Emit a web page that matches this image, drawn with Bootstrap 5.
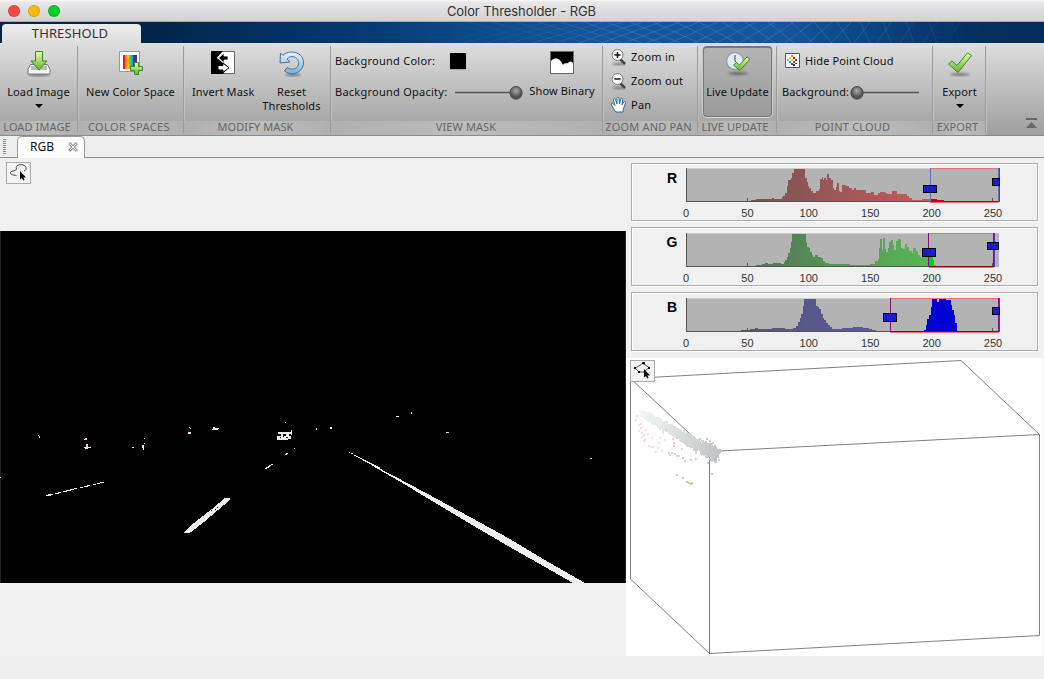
<!DOCTYPE html>
<html lang="en">
<head>
<meta charset="utf-8">
<title>Color Thresholder - RGB</title>
<link href="https://cdn.jsdelivr.net/npm/bootstrap@5.3.0/dist/css/bootstrap.min.css" rel="stylesheet">
<style>
html,body{height:679px;overflow:hidden}
body{font:11px/14px "Noto Sans","Open Sans",sans-serif;letter-spacing:.25px;color:#111;background:#f0f0f0}
svg{display:block;flex:none}
.titlebar{height:22px;background:linear-gradient(#f4f4f4 0 1px,#e8e8ea 2px,#d2d2d4 21px,#b0aca8 21px);border-radius:5px 5px 0 0;font:13px/22px Inter,sans-serif;letter-spacing:-.08px;color:#333}
.light{width:12px;height:12px;border-radius:50%;border:1px solid #0002}
.banner{height:21px;background:linear-gradient(90deg,#022549 0 150px,#03366c 330px,#0d4a8a 480px,#14559a 620px,#14559a 780px,#0b4482 870px,#04305f 970px,#032d59)}
.banner .mesh{margin-left:259px}
.tooltab{width:139px;height:19px;margin:2px 0 0 2px;padding-right:3px;border-radius:4px 4px 0 0;background:linear-gradient(#ececec,#dedede);font-size:13px;line-height:18px;color:#333;letter-spacing:.1px}
.ribbon{height:93px;background:linear-gradient(#dedede,#a8a8a8 84%,#a0a0a0);border-bottom:1px solid #8a8a8a}
.group{position:relative;flex:none}
.group::after{content:"";position:absolute;right:0;top:3px;height:87px;width:1px;background:#9c9c9c;box-shadow:1px 0 #cfcfcf80}
.gbody{height:78px}
.gfoot{height:14px;line-height:11px;background:linear-gradient(90deg,#b0b0b0,#bdbdbd 50%,#b0b0b0);color:#666;text-align:center;white-space:nowrap;letter-spacing:.1px;font-size:11px}
.tool{padding-top:8px;text-align:center;white-space:nowrap;letter-spacing:.13px}
.tool svg{margin:0 auto}
.tool .cap{margin-top:8px;line-height:14px}
.caret{width:0;height:0;border:4px solid transparent;border-top-color:#000;border-bottom:0;margin:5px auto 0}
.pressed{width:69px;height:71px;margin:3px 0 0 5px;border:1px solid #777;border-width:2px 1px 1px;border-radius:4px;background:linear-gradient(#b4b4b4,#9b9b9b);box-shadow:0 1px #ddd,1px 0 #ccc,-1px 0 #ccc}
.swatch{width:16px;height:16px;background:#000;box-shadow:0 1px 1px #8888}
.docs{height:22px;background:#ededed;border-bottom:1px solid #8f8f8f}
.grip{width:3px;height:15px;margin:3px 0 0 3px;background:repeating-linear-gradient(#888 0 1px,#ededed 1px 2px)}
.doctab{width:68px;height:22px;margin:0 0 0 11px;border:1px solid #999;border-bottom:0;border-radius:5px 5px 0 0;background:#fcfcfc;padding:0 6px 2px 12px;font-size:12px;line-height:20px;letter-spacing:0;position:relative}
.work{height:498px}
.left{width:626px}
.toolbtn{width:25px;height:22px;border:1px solid #aaa;background:#f3f3f3}
.frame{width:407px;height:59px;margin-left:5px;border:1px solid #acacac;box-shadow:1px 1px #fff,inset 1px 1px #fff}
.frame svg{margin:-1px;overflow:visible}
.hist text{font:11px "Liberation Sans",Arial,sans-serif;letter-spacing:0;fill:#333;text-anchor:middle}
.hist text.ch{font-weight:bold;font-size:14px;fill:#000}
.cloud{width:417px;height:298px;background:#fff;position:relative}
.cloud .toolbtn{position:absolute;left:4px;top:2px}
.status{height:23px;background:#ededed}
</style>
</head>
<body class="d-flex flex-column">
<svg width="0" height="0" class="position-absolute">
<defs>
<linearGradient id="grn" x2="0" y2="1"><stop stop-color="#e9fbb0"/><stop offset="1" stop-color="#62b531"/></linearGradient>
<linearGradient id="blu" x2="0" y2="1"><stop stop-color="#e6f4fc"/><stop offset="1" stop-color="#7fb0d8"/></linearGradient>
<radialGradient id="knob" cx=".5" cy=".35"><stop stop-color="#aaa"/><stop offset="1" stop-color="#555"/></radialGradient>
<linearGradient id="hr" gradientUnits="userSpaceOnUse" x1="183" x2="915"><stop stop-color="#585252"/><stop offset="1" stop-color="#c85a5a"/></linearGradient>
<linearGradient id="hg" gradientUnits="userSpaceOnUse" x1="183" x2="915"><stop stop-color="#555a55"/><stop offset=".45" stop-color="#568458"/><stop offset="1" stop-color="#57b857"/></linearGradient>
<linearGradient id="hb" gradientUnits="userSpaceOnUse" x1="183" x2="915"><stop stop-color="#55555a"/><stop offset="1" stop-color="#5a5ab8"/></linearGradient>
<filter id="soft" x="-.5" y="-2" width="2" height="5"><feGaussianBlur stdDeviation="1"/></filter>
</defs></svg>

<header class="titlebar d-flex align-items-center">
  <div class="d-flex gap-2" style="padding-left:8px"><span class="light" style="background:#fc4644"></span><span class="light" style="background:#fdb90b"></span><span class="light" style="background:#06d028"></span></div>
  <div class="flex-fill text-center" style="padding-right:61px">Color Thresholder - RGB</div>
</header>

<div class="banner d-flex">
  <div class="tooltab text-center">THRESHOLD</div>
  <svg class="mesh" width="590" height="21" fill="none" stroke="#5d9bd0" stroke-opacity=".32" id="mesh"></svg>
</div>

<nav class="ribbon d-flex">
  <section class="group" style="width:78px">
    <div class="gbody tool" style="padding-right:1px"><svg width="24" height="26"><ellipse cx="12" cy="24" rx="11" ry="1.5" fill="#777" filter="url(#soft)"/><path d="M3.5 13.5h17l2.5 5v4.500H1v-4.500z" fill="#f7f7f7" stroke="#777"/><path d="M4 15h16v4H4z" fill="#bbb"/><path d="M8.500.5h7V10H20l-8 9-8-9h4.500z" fill="url(#grn)" stroke="#3f8a1c"/></svg>
    <div class="cap">Load Image</div><div class="caret"></div></div>
    <div class="gfoot" style="padding-right:4px">LOAD IMAGE</div>
  </section>
  <section class="group" style="width:106px">
    <div class="gbody tool" style="padding-right:1px"><svg width="26" height="26"><path d="M1.500.5h20v20h-20z" fill="#fff" stroke="#999"/><path d="M5 4h2v14H5z" fill="#e51b24"/><path d="M7 4h2v14H7z" fill="#f6871f"/><path d="M9 4h2v14H9z" fill="#fbc815"/><path d="M11 4h2v14h-2z" fill="#76c043"/><path d="M13 4h2v14h-2z" fill="#1ba5de"/><path d="M15 4h2v14h-2z" fill="#2b3d96"/><path d="M17 4h2v14h-2z" fill="#5b2a88"/><path d="M16.500 11.500h4v4h4v4h-4v4h-4v-4h-4v-4h4z" fill="url(#grn)" stroke="#3f8a1c"/></svg>
    <div class="cap">New Color Space</div></div>
    <div class="gfoot" style="padding-right:4px;letter-spacing:.4px">COLOR SPACES</div>
  </section>
  <section class="group" style="width:147px">
    <div class="gbody d-flex" style="padding-left:8px">
      <div class="tool" style="width:61px"><svg width="24" height="26"><path d="M.5.5h23v22H.5z" fill="#fff" stroke="#666"/><g transform="translate(0 -1)"><path d="M0 1h12L6 7.500 12 12l5 5-5 7H0z" fill="#000"/><path d="M14.500 2 7 8l7.500 6" stroke="#fff" fill="none" stroke-width="1.500"/><path d="M17 6v4h-4v3L7.500 8 13 3v3z" fill="#000" stroke="#fff" stroke-width=".8"/><path d="M7 15.500h5V13l6 4.700-6 4.800v-2.500H7z" fill="#fff" stroke="#000"/></g></svg>
      <div class="cap">Invert Mask</div></div>
      <div class="tool" style="width:77px"><svg width="26" height="26"><ellipse cx="14" cy="24" rx="8" ry="1.500" fill="#777" filter="url(#soft)"/><path d="M1.500 2 4 4.500C8 .2 15 .3 19.500 2.800 25 6 26 13 22.500 18c-3.500 5-11 6.500-17 2l2.500-3.500c4 2.500 8.500 2 10.500-1 2-3.200 1.500-7-2-9-3-1.600-6.500-1-8.500 1.500L11 11l-10 1z" fill="url(#blu)" stroke="#41719d"/></svg>
      <div class="cap">Reset<br>Thresholds</div></div>
    </div>
    <div class="gfoot" style="padding-right:4px">MODIFY MASK</div>
  </section>
  <section class="group" style="width:272px">
    <div class="gbody d-flex text-nowrap" style="padding-left:4px">
      <div style="width:190px">
        <div class="d-flex align-items-center" style="height:18px;margin-top:9px"><span style="width:115px">Background Color:</span><div class="swatch"></div></div>
        <div class="d-flex align-items-center" style="margin-top:13px;height:18px"><span style="width:120px">Background Opacity:</span><svg width="70" height="18"><path d="M0 9.500h60" stroke="#555" stroke-width="1.500"/><circle cx="61" cy="10.500" r="6.500" fill="#777"/><circle cx="61" cy="9.500" r="6" fill="url(#knob)" stroke="#444"/></svg></div>
      </div>
      <div class="tool" style="width:74px"><svg width="24" height="26"><path d="M.5.5h23v22H.5z" fill="#000" stroke="#666"/><path d="M1 22V10c4-4 8-4 12 4 2-3 4-1 5-2 2-2 3-2 5 0v10z" fill="#fff"/></svg><div class="cap" style="margin-top:7px">Show Binary</div></div>
    </div>
    <div class="gfoot" style="padding-right:2px">VIEW MASK</div>
  </section>
  <section class="group" style="width:95px">
    <div class="gbody" style="padding:2px 0 0 7px">
      <div class="d-flex align-items-center gap-1" style="height:24px"><svg width="17" height="18"><ellipse cx="9" cy="16" rx="7" ry="1.200" fill="#777" filter="url(#soft)"/><path d="m10 11 5 5" stroke="#444" stroke-width="2.500"/><circle cx="7.500" cy="7" r="5.500" fill="#fff" stroke="#777"/><path d="M4.500 7h6M7.500 4v6" stroke="#111" stroke-width="1.500"/></svg>Zoom in</div>
      <div class="d-flex align-items-center gap-1" style="height:24px"><svg width="17" height="18"><ellipse cx="9" cy="16" rx="7" ry="1.200" fill="#777" filter="url(#soft)"/><path d="m10 11 5 5" stroke="#444" stroke-width="2.500"/><circle cx="7.500" cy="7" r="5.500" fill="#fff" stroke="#777"/><path d="M4.500 7h6" stroke="#111" stroke-width="1.500"/></svg>Zoom out</div>
      <div class="d-flex align-items-center gap-1" style="height:24px"><svg width="17" height="18"><path d="M5 15 1.500 9C.5 7 2.500 6.500 3.500 8L5 9.500 3.500 4c-.3-1.800 1.500-2 2-.5L7 8V2.500c0-1.500 2-1.500 2 0L9.500 8l1.300-5c.5-1.500 2.200-1 1.900.5L12 9l1.700-3c1-1.300 2.300-.5 1.800 1L13 14v2H6z" fill="#fff" stroke="#356a94"/></svg>Pan</div>
    </div>
    <div class="gfoot" style="padding-right:4px;letter-spacing:.2px">ZOOM AND PAN</div>
  </section>
  <section class="group" style="width:79px">
    <div class="gbody d-flex"><div class="pressed tool" style="padding-top:3px"><svg width="26" height="26"><ellipse cx="13" cy="22.500" rx="10" ry="1.500" fill="#666" filter="url(#soft)"/><circle cx="10" cy="10" r="8.500" fill="#e4edf3" stroke="#8fa0ac" stroke-width="1.500"/><path d="M10 4v6l3 3" stroke="#445" fill="none"/><path d="m8.500 14 3-2.500 3 2.500L22 6l3 2-10 11.500z" fill="url(#grn)" stroke="#3f8a1c"/></svg><div class="cap">Live Update</div></div></div>
    <div class="gfoot" style="padding-right:5px">LIVE UPDATE</div>
  </section>
  <section class="group" style="width:156px">
    <div class="gbody" style="padding-left:5px">
      <div class="d-flex align-items-center" style="height:18px;padding:9px 0 0 3px;box-sizing:content-box;letter-spacing:.13px"><svg width="15" height="16" style="margin-right:5px"><path d="M.5.5h14v14H.5z" fill="#fff" stroke="#555"/><path d="M6 2h2v2H6z" fill="#f68b1f"/><path d="M8 4h2v2H8z" fill="#e21c22"/><path d="M4 4h2v2H4z" fill="#fcc417"/><path d="M2 6h2v2H2z" fill="#7ac143"/><path d="M6 6h2v2H6z" fill="#fcc417"/><path d="M10 6h2v2h-2z" fill="#b01f6a"/><path d="M4 8h2v2H4z" fill="#1ba5de"/><path d="M8 8h2v2H8z" fill="#d22"/><path d="M6 10h2v2H6z" fill="#1a62b5"/><path d="M10 10h2v1h-2zM8 11h2v2H8z" fill="#2b2d86"/></svg>Hide Point Cloud</div>
      <div class="d-flex align-items-center text-nowrap" style="margin-top:13px;height:18px;letter-spacing:.15px"><span style="width:68px">Background:</span><svg width="70" height="18"><path d="M8 9.500h61" stroke="#555" stroke-width="1.500"/><circle cx="7" cy="10.500" r="6.500" fill="#777"/><circle cx="7" cy="9.500" r="6" fill="url(#knob)" stroke="#444"/></svg></div>
    </div>
    <div class="gfoot" style="padding-right:5px;letter-spacing:.2px">POINT CLOUD</div>
  </section>
  <section class="group" style="width:53px">
    <div class="gbody tool"><svg width="26" height="26"><ellipse cx="13" cy="23.500" rx="10" ry="1.500" fill="#777" filter="url(#soft)"/><path d="m1.500 13 3.500-3 5 4.500L20.500 2l4 2.500L11 21.500z" fill="url(#grn)" stroke="#3f8a1c"/></svg>
    <div class="cap">Export</div><div class="caret"></div></div>
    <div class="gfoot" style="padding-right:4px">EXPORT</div>
  </section>
  <div class="ms-auto align-self-end" style="padding:0 7px 6px 0"><svg width="11" height="11"><path d="M0 0h11v2H0zM5.500 4 11 10H0z" fill="#666"/></svg></div>
</nav>

<div class="docs d-flex">
  <div class="grip"></div>
  <div class="doctab d-flex align-items-center justify-content-between"><span>RGB</span><svg width="10" height="10" fill="none"><path d="m1 1 8 8M9 1 1 9" stroke="#999" stroke-width="3"/><path d="m1.500 1.500 7 7M8.500 1.500l-7 7" stroke="#fff"/></svg></div>
</div>

<main class="work d-flex">
  <div class="left">
    <div style="padding:4px 0 0 6px;height:73px"><div class="toolbtn"><svg width="23" height="20" fill="none"><path d="M9.500 12.500C6 12 3 11.500 3.500 9.500 4 7.500 9 8.500 9.500 6 8 2 13 1 16 2c4 1 4 5 1 6" stroke="#444"/><path d="M13 8v8.500l2-1.500 1.300 2.500 1.300-.7-1.300-2.400H19z" fill="#000"/></svg></div></div>
    <svg width="626" height="352" viewBox="0 231 626 352" shape-rendering="crispEdges" fill="#eceef0">
      <path d="M0 231h626v352H0z" fill="#000"/><path d="M0 231h1v352H0zM625 231h1v352h-1z" fill="#222"/>
      <path d="M373 465 400 479.200 430 495.200 470 517 510 539 550 563 585 583H573L545 567 508 546 468 522.500 428 498.500 400 481.500 373 466.200z"/>
      <path d="M349 452h1v1h-1zM351 453h2v1h-2zM354 455h2v1h-2zM356 456h2v1h-2zM358 457h2v1h-2zM360 458h2v1h-2zM362 459h2v1h-2zM363 460h3v1h-3zM365 461h3v1h-3zM367 462h3v1h-3zM369 463h3v1h-3zM371 464h3v1h-3zM372 465h4v1h-4zM374 466h4v1h-4zM376 467h4v1h-4z"/>
      <path d="m184 533 4-5 11-9 13-10 13-11h5v2l-12 10-14 12-13 10-3 1z"/>
      <path d="M215 509h1v1h-1zM217 507h1v1h-1zM211 510h1v1h-1z" fill="#000"/>
      <path d="M46 495h5v1h-5zM48 494h5v1h-5zM55 493h4v1h-4zM58 492h3v1h-3zM63 491h4v1h-4zM66 490h5v1h-5zM70 489h4v1h-4zM74 488h3v1h-3zM80 487h3v1h-3zM84 486h4v1h-4zM87 485h3v1h-3zM93 484h3v1h-3zM97 483h3v1h-3zM100 482h4v1h-4zM0 477h1v1H0z"/>
      <path d="M265 468h2v1h-2zM266 467h3v1h-3zM268 466h2v1h-2zM269 465h2v1h-2zM271 464h2v1h-2zM285 454h2v1h-2zM286 453h2v1h-2zM294 448h1v1h-1zM285 422h1v1h-1z"/>
      <path d="M278 432h13v2h-13zM277 436h14v3h-14zM277 438h11v2h-11zM281 434h2v2h-2zM286 434h3v2h-3zM291 430h1v5h-1z"/><path d="M280 437h1v1h-1zM283 436h1v1h-1zM286 437h2v1h-2z" fill="#000"/>
      <path d="M189 427h1v1h-1zM190 428h1v1h-1zM213 427h2v1h-2zM212 429h6v1h-6zM213 428h6v1h-6zM38 435h1v1h-1zM39 436h1v2h-1zM132 447h2v1h-2zM144 438h1v1h-1zM144 443h1v1h-1zM142 445h2v3h-2zM143 448h1v2h-1zM330 427h2v2h-2zM316 428h1v2h-1zM396 416h3v1h-3zM411 412h1v2h-1z"/>
      <path d="M188 432h3v2h-3zM85 438h2v2h-2zM84 439h2v1h-2zM86 444h2v3h-2zM84 447h7v1h-7zM85 448h3v1h-3z" fill="#f8dcd8"/><path d="M446 432h3v1h-3zM590 458h2v1h-2z" fill="#e8c898"/>
    </svg>
  </div>
  <div class="flex-fill">
    <div class="d-flex flex-column" style="height:200px;padding-top:5px;gap:6px" id="hists"></div>
    <div class="cloud"><svg width="417" height="298" viewBox="626 358 417 298" id="pts"><path d="M630.500 378.500 961 360.500l78.500 74v201l-330 18-79-74.500V378.500l79 73.500v201.500M709.500 451.500l330-17" fill="none" stroke="#808080"/></svg>
      <div class="toolbtn"><svg width="23" height="20"><path d="m12 2.500 6 4-5 4.500H8L4 7z" fill="none" stroke="#555"/><path d="M11 1h3v2h-3zM3 6h2v2H3zM17 6h2v2h-2zM7 10h2v2H7zM13 8v8.500l2-1.500 1.300 2.500 1.300-.7-1.300-2.400H19z"/></svg></div></div>
  </div>
</main>
<footer class="status"></footer>

<script src="https://cdn.jsdelivr.net/npm/bootstrap@5.3.0/dist/js/bootstrap.bundle.min.js"></script>
<script>
// Each channel: profile steps as [x, height] at triple resolution, x from 183 (value 0) to 1121 (value 255)
const channels = [
 {n:'R',h:58,g:'hr',sat:'#d40000',lo:915,hi:1122,m1:103,m2:81,
  p:[[275,2],[378,5],[393,8],[440,11],[446,9],[470,13],[475,18],[480,25],[485,46],[489,65],[497,72],[500,86],[508,99],[541,70],[545,60],[548,48],[553,40],[558,33],[563,26],[573,33],[582,38],[585,68],[590,74],[594,65],[597,72],[602,65],[606,83],[612,72],[618,64],[624,42],[628,36],[632,44],[636,56],[642,32],[646,30],[652,50],[663,47],[672,42],[680,36],[687,40],[692,35],[722,27],[738,30],[747,21],[760,27],[765,30],[780,26],[787,23],[802,33],[816,24],[824,22],[838,24],[845,18],[853,12],[861,6],[890,8],[915,8],[920,9],[936,6],[957,2],[1045,3],[1075,1],[1121,1]]},
 {n:'G',h:59,g:'hg',sat:'#00d400',lo:911,hi:1106,m1:99,m2:79,
  p:[[280,2],[393,5],[410,8],[420,11],[430,8],[445,11],[468,9],[477,14],[480,20],[485,30],[489,41],[494,55],[498,73],[502,99],[543,75],[546,60],[551,56],[555,43],[560,35],[565,30],[571,35],[580,30],[588,26],[595,18],[601,11],[613,8],[662,9],[675,6],[735,9],[750,16],[758,24],[762,55],[765,84],[770,50],[773,86],[780,54],[783,43],[788,55],[793,74],[797,80],[803,65],[808,51],[813,77],[820,84],[827,55],[833,54],[840,68],[847,60],[853,48],[860,42],[865,55],[873,48],[880,35],[886,30],[890,42],[900,38],[910,35],[917,30],[923,20],[928,4],[933,1],[1105,1]]},
 {n:'B',h:59,g:'hb',sat:'#0000d4',lo:795,hi:1122,m1:99,m2:79,
  p:[[285,2],[348,6],[375,9],[390,11],[400,8],[442,11],[480,8],[505,11],[513,17],[518,28],[524,40],[529,54],[533,76],[538,99],[573,77],[578,73],[583,67],[588,54],[593,42],[598,35],[603,25],[608,20],[615,13],[622,8],[638,9],[650,12],[685,15],[715,11],[733,9],[740,5],[752,2],[795,2],[897,6],[902,20],[906,38],[912,50],[917,75],[921,99],[936,90],[943,99],[964,94],[972,96],[978,80],[982,64],[987,50],[990,27],[996,2],[1121,2]]}];
function area(p,a,b){let d='M'+a+' 141';for(let i=0;i<p.length-1;i++){const x0=Math.max(p[i][0],a),x1=Math.min(p[i+1][0],b);if(x1>x0)d+=`L${x0} ${140-p[i][1]}H${x1}`}return d+`L${b} 141z`}
document.getElementById('hists').innerHTML=channels.map(c=>{
 const mk=(x,y,w)=>`<rect x="${x}" y="${y-11}" width="${w}" height="22" fill="#1c1ccc" stroke="#000" stroke-width="3"/>`;
 const labels=[0,50,100,150,200,250].map(v=>`<text x="${55+v*1.228}" y="${c.n=='R'?54:55}">${v}</text>`).join('');
 return `<div class="frame" style="height:${c.h}px"><svg class="hist" width="407" height="${c.h}">
 <g transform="translate(-6 ${c.n=='R'?-8:-7}) scale(.33333)" shape-rendering="crispEdges">
 <path d="M183 39H1121V141H183z" fill="#b3b3b3"/><path d="M183 40.500H1121" stroke="#ccc" stroke-width="3"/>
 <path d="${area(c.p,183,c.lo)}" fill="url(#${c.g})"/><path d="${area(c.p,c.lo,Math.min(c.hi,1121))}" fill="${c.sat}"/>
 <path d="M184.500 40V139.500H${c.lo}M368 130v10M1103 130v10" fill="none" stroke="#555" stroke-width="3"/>
 <path d="M${c.lo} 139.500H${c.hi}" stroke="${c.n=='R'?'#b00000':'#801018'}" stroke-width="3"/>
 <path d="M${c.lo} 40.500H${c.hi}M${c.lo} 142.500H${c.hi}" stroke="#f07070" stroke-width="3"/>
 <path d="M${c.lo+1} 40V142M${c.hi} 40V142" stroke="${c.n=='R'?'#6868c8':'#80107a'}" stroke-width="3"/><path d="M${c.hi+2} 40V142" stroke="#6030b0" stroke-width="3"/>
 ${mk(c.lo-18,c.m1-1,38)}${mk(c.hi-19,c.m2,c.n=='G'?34:20)}</g>
 <text class="ch" x="41" y="20">${c.n}</text>${labels}</svg></div>`}).join('');

// Banner wire mesh
let mesh='';
for(let i=0;i<26;i++){const x=i*23,t=Math.max(8,90-i*4);mesh+=`<path opacity="${Math.min(1,i/9)*Math.min(1,(26-i)/7)}" d="M${x} 0l${t} 21M${x+t} 0L${x-6} 21"/>`}
document.getElementById('mesh').innerHTML=mesh;

// Point cloud: dense grey band plus sparse coloured outliers
let seed=7;const rnd=()=>(seed=(seed*16807)%2147483647)/2147483647;
let dots='';const dot=(x,y,c,s=2)=>dots+=`<rect x="${Math.round(x)}" y="${Math.round(y)}" width="${s}" height="${s}" fill="${c}"/>`;
for(let i=0;i<1500;i++){const t=rnd(),g=Math.round(246-50*t),o=(rnd()+rnd()-1)*(3+3.500*t);dot(640+77*t-o*.4,412+43*t+o*1.1,`rgb(${g-3},${g},${g+1})`)}
// x, y of the pink and rose outliers below the band
[[636,415],[635,419],[638,424],[640,427],[638,430],[641,432],[641,436],[640,423],[643,434],[645,429],[644,439],[643,440],[648,445],[650,446],[652,446],[655,451],[654,451],[658,442],[659,437],[662,432],[657,447],[664,439],[665,429],[668,452],[669,454],[672,438],[673,445],[673,442],[676,437],[674,453],[676,455],[671,452],[681,448],[680,440],[686,445],[682,457],[689,443],[695,452],[695,458],[684,460],[690,459],[647,433],[651,437],[661,450],[678,455]]
 .forEach(a=>dot(a[0],a[1],a[0]<665?'#f6dde0':'#e6ced3'));
[[705,441],[709,440],[712,442],[707,445],[706,438],[714,461],[718,459],[711,460],[707,462]].forEach(a=>dot(a[0],a[1],'#c8ccd0'));
[[676,474],[682,477],[686,481],[688,482],[690,483],[691,482],[711,473]].forEach(a=>dot(a[0],a[1],'#d5c59c'));
document.getElementById('pts').insertAdjacentHTML('beforeend','<g shape-rendering="crispEdges">'+dots+'</g>');
</script>
</body>
</html>
